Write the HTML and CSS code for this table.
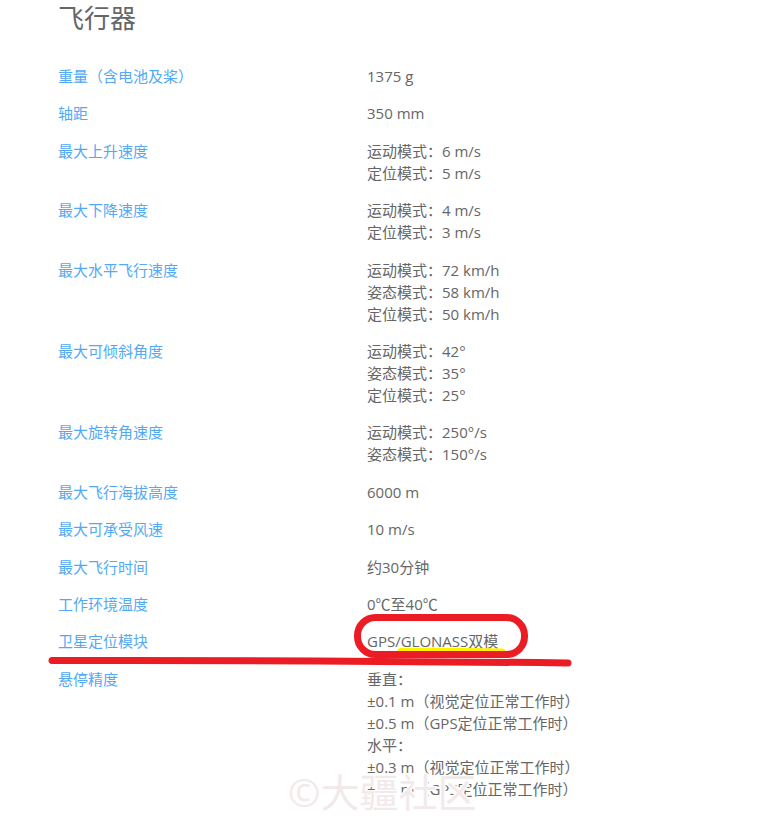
FILE: index.html
```html
<!DOCTYPE html>
<html lang="zh-CN">
<head>
  <meta charset="UTF-8">
  <meta name="viewport" content="width=device-width, initial-scale=1.0">
  <title>飞行器 参数</title>
  <link rel="stylesheet" href="styles.css">
</head>
<body>
  <!-- 参数表 -->
  <div class="specs">
    <h2 class="specs-title">飞行器</h2>
    <dl class="spec-list">
      <div class="spec-row">
        <dt>重量（含电池及桨）</dt>
        <dd>1375 g</dd>
      </div>
      <div class="spec-row">
        <dt>轴距</dt>
        <dd>350 mm</dd>
      </div>
      <div class="spec-row">
        <dt>最大上升速度</dt>
        <dd>运动模式：6 m/s<br>定位模式：5 m/s</dd>
      </div>
      <div class="spec-row">
        <dt>最大下降速度</dt>
        <dd>运动模式：4 m/s<br>定位模式：3 m/s</dd>
      </div>
      <div class="spec-row">
        <dt>最大水平飞行速度</dt>
        <dd>运动模式：72 km/h<br>姿态模式：58 km/h<br>定位模式：50 km/h</dd>
      </div>
      <div class="spec-row">
        <dt>最大可倾斜角度</dt>
        <dd>运动模式：42°<br>姿态模式：35°<br>定位模式：25°</dd>
      </div>
      <div class="spec-row">
        <dt>最大旋转角速度</dt>
        <dd>运动模式：250°/s<br>姿态模式：150°/s</dd>
      </div>
      <div class="spec-row">
        <dt>最大飞行海拔高度</dt>
        <dd>6000 m</dd>
      </div>
      <div class="spec-row">
        <dt>最大可承受风速</dt>
        <dd>10 m/s</dd>
      </div>
      <div class="spec-row">
        <dt>最大飞行时间</dt>
        <dd>约30分钟</dd>
      </div>
      <div class="spec-row">
        <dt>工作环境温度</dt>
        <dd>0℃至40℃</dd>
      </div>
      <div class="spec-row">
        <dt>卫星定位模块</dt>
        <dd>GPS/GLONASS双模</dd>
      </div>
      <div class="spec-row">
        <dt>悬停精度</dt>
        <dd>垂直：<br>±0.1 m（视觉定位正常工作时）<br>±0.5 m（GPS定位正常工作时）<br>水平：<br>±0.3 m（视觉定位正常工作时）<br>±1.5 m（GPS定位正常工作时）</dd>
      </div>
    </dl>
  </div>

  <!-- 手绘标注 -->
  <svg class="marks" width="765" height="823" viewBox="0 0 765 823">
    <path class="mark-yellow" d="M401 652 Q450 651.5 502 652.5"/>
    <rect class="mark-red" x="357.5" y="617.5" width="167" height="37" rx="18"/>
    <path class="mark-red" d="M52 660.5 Q300 660 568 663" stroke-width="8"/>
  </svg>

  <div class="watermark">©大疆社区</div>
</body>
</html>
```

FILE: styles.css
```css
/* === BASE === */
* {
  margin: 0;
  padding: 0;
  box-sizing: border-box;
}
body {
  position: relative;
  width: 765px;
  min-height: 823px;
  background: #fff;
  color: #666;
  font-family: "Open Sans", "Noto Sans CJK SC", sans-serif;
  font-size: 15px;
  overflow: hidden;
}

/* === SPEC TABLE === */
.specs {
  padding-left: 58px;
}
.specs-title {
  font-size: 26px;
  font-weight: 400;
  line-height: 36px;
  color: #666;
}
.spec-list {
  margin-top: 22px;
}
.spec-row {
  display: grid;
  grid-template-columns: 309px 1fr;
  padding: 7px 0 8.4px;
  line-height: 22px;
}
.spec-row dt {
  color: #52a9f4;
}
.spec-row dd {
  color: #666;
}

/* === ANNOTATIONS === */
.marks {
  position: absolute;
  left: 0;
  top: 0;
  pointer-events: none;
}
.mark-red {
  fill: none;
  stroke: #ec1c24;
  stroke-width: 7;
  stroke-linecap: round;
}
.mark-yellow {
  fill: none;
  stroke: #fff200;
  stroke-width: 8;
  stroke-linecap: round;
}

.watermark {
  position: absolute;
  left: 288px;
  top: 772px;
  font-size: 39px;
  line-height: 40px;
  color: #f2eaea;
  text-shadow: 0 0 2px #fff, 1px 1px 0 #fff, -1px -1px 0 #fff, 1px -1px 0 #fff, -1px 1px 0 #fff;
  pointer-events: none;
}
```
